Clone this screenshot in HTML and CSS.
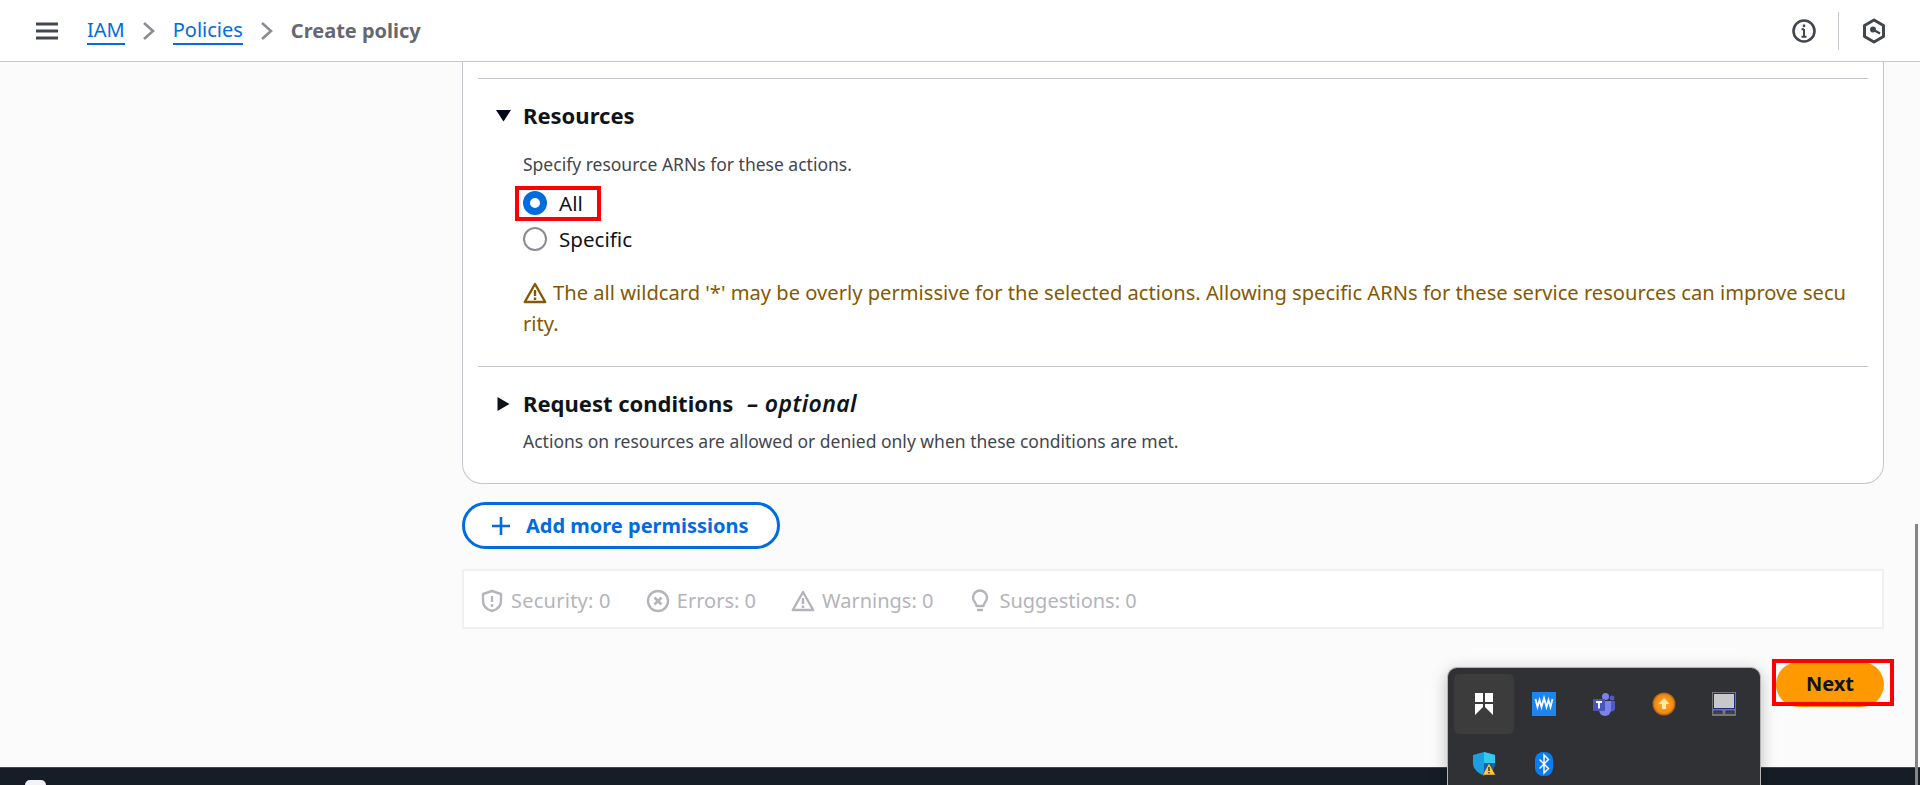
FILE: index.html
```html
<!DOCTYPE html>
<html lang="en">
<head>
<meta charset="utf-8">
<title>Create policy</title>
<link rel="stylesheet" href="styles.css">
</head>
<body>
<header class="topbar">
  <svg class="menu" width="22" height="18" viewBox="0 0 22 18"><path d="M0 2h22M0 9h22M0 16h22" stroke="#424650" stroke-width="2.800" fill="none"/></svg>
  <nav class="crumbs">
    <a class="crumb-link">IAM</a>
    <svg class="chev" width="14" height="20" viewBox="0 0 14 20"><path d="M2 2l9 8-9 8" stroke="#8c8c94" stroke-width="2.600" fill="none"/></svg>
    <a class="crumb-link">Policies</a>
    <svg class="chev" width="14" height="20" viewBox="0 0 14 20"><path d="M2 2l9 8-9 8" stroke="#8c8c94" stroke-width="2.600" fill="none"/></svg>
    <span class="crumb-current">Create policy</span>
  </nav>
  <div class="top-actions">
    <svg width="26" height="26" viewBox="0 0 26 26"><circle cx="13" cy="13" r="10.500" stroke="#424650" stroke-width="2.600" fill="none"/><path d="M13 11v8M10.500 18.700h5M10.500 11.300H13" stroke="#424650" stroke-width="2" fill="none"/><rect x="11.800" y="6.500" width="2.400" height="2.600" fill="#424650"/></svg>
    <span class="top-sep"></span>
    <svg width="24" height="26" viewBox="0 0 24 26"><path d="M12 2l9.500 5.500v11L12 24l-9.500-5.500v-11z" stroke="#424650" stroke-width="3" fill="none" stroke-linejoin="round"/><circle cx="11" cy="11.500" r="3" fill="#424650"/><path d="M11 11.500l7 4" stroke="#424650" stroke-width="2.500"/></svg>
  </div>
</header>

<main class="page">
  <section class="card">
    <hr class="rule rule-top">
    <div class="panel">
      <h3 class="panel-title"><svg class="caret" width="16" height="12" viewBox="0 0 16 12"><path d="M0 0h15L7.500 11.500z" fill="#000716"/></svg>Resources</h3>
      <p class="hint">Specify resource ARNs for these actions.</p>
      <label class="radio-row radio-marked"><span class="radio radio-on"></span>All</label>
      <label class="radio-row"><span class="radio"></span>Specific</label>
      <p class="warning"><svg class="warn-icon" width="24" height="22" viewBox="0 0 24 22"><path d="M12 2L1.800 20h20.400z" stroke="#855900" stroke-width="2.400" fill="none" stroke-linejoin="round"/><path d="M12 8v6M12 15.500v2.500" stroke="#855900" stroke-width="2.400"/></svg>The all wildcard '*' may be overly permissive for the selected actions. Allowing specific ARNs for these service resources can improve security.</p>
    </div>
    <hr class="rule">
    <div class="panel panel-conditions">
      <h3 class="panel-title"><svg class="caret caret-closed" width="16" height="16" viewBox="0 0 16 16"><path d="M1.500 1l12 7-12 7z" fill="#0f141a"/></svg>Request conditions <i class="optional">– optional</i></h3>
      <p class="hint">Actions on resources are allowed or denied only when these conditions are met.</p>
    </div>
  </section>

  <button class="add-btn" type="button"><svg width="20" height="20" viewBox="0 0 20 20"><path d="M10 1v18M1 10h18" stroke="#006ce0" stroke-width="2.600"/></svg>Add more permissions</button>

  <div class="checks">
    <span class="check"><svg width="24" height="24" viewBox="0 0 24 24"><path d="M12 2l9 3v7c0 5-4 8.500-9 10-5-1.500-9-5-9-10V5z" stroke="#b4b4bb" stroke-width="2.400" fill="none" stroke-linejoin="round"/><path d="M12 7v6M12 15v3" stroke="#b4b4bb" stroke-width="2.400"/></svg>Security: 0</span>
    <span class="check"><svg width="24" height="24" viewBox="0 0 24 24"><circle cx="12" cy="12" r="10" stroke="#b4b4bb" stroke-width="2.400" fill="none"/><path d="M8.500 8.500l7 7M15.500 8.500l-7 7" stroke="#b4b4bb" stroke-width="2.600"/></svg>Errors: 0</span>
    <span class="check"><svg width="24" height="24" viewBox="0 0 24 24"><path d="M12 3L1.800 21h20.400z" stroke="#b4b4bb" stroke-width="2.400" fill="none" stroke-linejoin="round"/><path d="M12 9v6M12 16.500v2.500" stroke="#b4b4bb" stroke-width="2.400"/></svg>Warnings: 0</span>
    <span class="check"><svg width="24" height="24" viewBox="0 0 24 24"><path d="M8.500 17c0-3-3.500-4.500-3.500-8.500a7 7 0 0 1 14 0c0 4-3.500 5.500-3.500 8.500z" stroke="#b4b4bb" stroke-width="2.400" fill="none" stroke-linejoin="round"/><path d="M9 21h6" stroke="#b4b4bb" stroke-width="2.400"/></svg>Suggestions: 0</span>
  </div>

  <div class="actions">
    <button class="next-btn" type="button">Next</button>
  </div>
</main>

<footer class="footer"><span class="footer-tab"></span></footer>

<span class="scroll-thumb"></span>

<div class="tray">
  <span class="tray-item tray-item-active"><svg width="20" height="24" viewBox="0 0 20 24"><path d="M1 1h8v9H1zM11 1h8v9h-8zM1 12h8v3l-8 8zM11 12h8v11l-8-8z" fill="#fff"/></svg></span>
  <span class="tray-item"><svg width="24" height="24" viewBox="0 0 24 24"><rect width="24" height="24" fill="#1b86f2"/><path d="M3.500 7l2 8 2-7 2 7 2.500-9 2.500 9 2-7 2 7 2-8" stroke="#fff" stroke-width="1.800" fill="none"/></svg></span>
  <span class="tray-item"><svg width="24" height="24" viewBox="0 0 24 24"><circle cx="13.500" cy="4.500" r="3.500" fill="#7b83eb"/><circle cx="20" cy="6" r="2.500" fill="#5059c9"/><path d="M16 9h7v7a3.500 3.500 0 0 1-7 0z" fill="#5059c9"/><path d="M7 9h12v9a6 6 0 0 1-12 0z" fill="#7b83eb"/><rect x="1" y="7" width="12" height="12" rx="1" fill="#4b53bc"/><path d="M4 10h6M7 10v6.500" stroke="#fff" stroke-width="1.800"/></svg></span>
  <span class="tray-item"><svg width="24" height="24" viewBox="0 0 24 24"><defs><radialGradient id="orb"><stop offset="0" stop-color="#ffb12e"/><stop offset="0.800" stop-color="#f08a12"/><stop offset="1" stop-color="#9a5a14"/></radialGradient></defs><circle cx="12" cy="12" r="11.500" fill="url(#orb)"/><path d="M12 6l5.500 6H14v5h-4v-5H6.500z" fill="#ffe9a8"/></svg></span>
  <span class="tray-item"><svg width="24" height="24" viewBox="0 0 24 24"><rect width="24" height="24" fill="#777"/><rect x="1.500" y="1.500" width="21" height="15" fill="#c8c8c8" stroke="#1f2a8c"/><path d="M2 22v-3h8v3M14 22v-3h8v3" stroke="#1f2a8c" stroke-width="1" fill="#444"/></svg></span>
  <span class="tray-item"><svg width="24" height="24" viewBox="0 0 24 24"><path d="M12 0l11 3v8c0 6-5 10-11 13C6 21 1 17 1 11V3z" fill="#1a9fe0"/><path d="M12 0l11 3v8H12z" fill="#35c8f2"/><path d="M12 11h11c0 6-5 10-11 13z" fill="#1060b8"/><path d="M17 11l6.500 12h-13z" fill="#ffc83d" stroke="#333" stroke-width=".5"/><path d="M17 15v4M17 20v1.500" stroke="#222" stroke-width="1.300"/></svg></span>
  <span class="tray-item"><svg width="18" height="24" viewBox="0 0 18 24"><rect width="18" height="24" rx="8" fill="#0a7cf2"/><path d="M4.500 7.500l9 9L9 21V3l4.500 4.500-9 9" stroke="#fff" stroke-width="1.500" fill="none"/></svg></span>
</div>
</body>
</html>
```

FILE: styles.css
```css
*, *::before, *::after { box-sizing: border-box; }
html, body { height: 100%; }
body {
  margin: 0;
  display: flex;
  flex-direction: column;
  height: 785px;
  overflow: hidden;
  background: #fbfbfc;
  color: #0f141a;
  font-family: "Noto Sans", "Open Sans", sans-serif;
  font-size: 14px;
  position: relative;
}
.topbar {
  flex: 0 0 62px;
  display: flex;
  align-items: center;
  background: #fff;
  border-bottom: 1px solid #c6c6cd;
  padding: 0 34px 0 36px;
}
.menu { margin-right: 29px; }
.crumbs { display: flex; align-items: center; gap: 17px; font-size: 20px; }
.crumb-link { color: #006ce0; border-bottom: 2px solid #006ce0; line-height: 26px; }
.crumb-current { color: #656871; font-weight: 700; }
.top-actions { margin-left: auto; display: flex; align-items: center; gap: 21px; }
.top-sep { width: 1px; height: 38px; background: #c6c6cd; margin-right: 2px; }

.page { flex: 1; padding: 0 36px 0 462px; min-height: 0; }
.card {
  height: 422px;
  background: #fff;
  border: 1px solid #c6c6cd;
  border-top: 0;
  border-radius: 0 0 20px 20px;
  padding: 16px 15px 0;
}
.rule { border: 0; border-top: 1px solid #c6c6cd; margin: 0; }
.panel { padding: 22px 15px 0 45px; height: 287px; }
.panel-conditions { height: auto; }
.panel-title { position: relative; margin: 0; font-size: 22px; line-height: 28px; font-weight: 700; color: #0f141a; }
.caret { position: absolute; left: -27px; top: 9px; }
.caret-closed { top: 7px; }
.optional { font-size: 23px; letter-spacing: .4px; font-weight: 600; margin-left: 8px; }
.hint { margin: 23px 0 0; font-size: 17.5px; line-height: 24px; color: #424650; }
.panel-conditions .hint { margin-top: 12px; }
.radio-row { display: flex; align-items: center; gap: 12px; font-size: 20.6px; height: 36px; position: relative; color: #0f141a; width: 70px; }
.hint + .radio-row { margin-top: 9px; }
.radio { width: 24px; height: 24px; border-radius: 50%; border: 2px solid #8c8c94; background: #fff; flex: none; }
.radio-on { border: 7px solid #006ce0; }
.radio-marked::after {
  content: "";
  position: absolute;
  left: -8px; top: 1px; width: 86px; height: 35px;
  border: 4px solid #f00;
}
.warning { margin: 20px 0 0; font-size: 20.15px; line-height: 31px; color: #855900; word-break: break-all; }
.warn-icon { vertical-align: -4px; margin-right: 6px; }

.add-btn {
  display: flex; align-items: center; gap: 15px;
  margin-top: 18px;
  width: 318px; height: 47px;
  padding: 0 0 0 26px;
  border: 3px solid #006ce0;
  border-radius: 24px;
  background: #fff;
  color: #006ce0;
  font: 700 20px "Noto Sans", sans-serif;
}
.checks {
  margin-top: 20px;
  height: 60px;
  display: flex; align-items: center; gap: 35px;
  padding: 3px 0 0 16px;
  background: #fff;
  border: 2px solid #f0f0f3;
  color: #b4b4bb;
  font-size: 20px;
}
.check { display: flex; align-items: center; gap: 7px; }
.check:first-child { letter-spacing: .25px; }
.actions { display: flex; justify-content: flex-end; margin-top: 33px; position: relative; }
.next-btn {
  width: 108px; height: 45px;
  padding: 0 0 2px;
  border: 0; border-radius: 23px;
  background: #ff9900;
  color: #0f141a;
  font: 700 20px "Noto Sans", sans-serif;
  position: relative;
}
.actions::after {
  content: "";
  position: absolute;
  right: -10px; top: -3px; width: 122px; height: 47px;
  border: 4px solid #f00;
}
.footer { flex: 0 0 18px; background: #161d26; position: relative; border-top: 1px solid #424650; z-index: 1; }
.footer-tab { position: absolute; left: 25px; top: 12px; width: 21px; height: 10px; background: #f3f3f7; border-radius: 5px 5px 0 0; }
.scroll-thumb { position: absolute; right: 2px; top: 524px; width: 3px; height: 261px; background: #858585; z-index: 2; }
.tray {
  position: absolute; z-index: 3;
  left: 1447px; top: 667px; width: 314px; height: 130px;
  padding: 6px 6px 0;
  display: grid;
  grid-template-columns: repeat(5, 60px);
  grid-auto-rows: 60px;
  background: #2f3134;
  border: 1px solid #b4b4b4;
  border-bottom: 0;
  border-radius: 10px 10px 0 0;
  box-shadow: 0 4px 16px rgba(0,0,0,.25);
}
.tray-item { display: flex; align-items: center; justify-content: center; border-radius: 5px; }
.tray-item-active { background: #3c3c3d; }
```
